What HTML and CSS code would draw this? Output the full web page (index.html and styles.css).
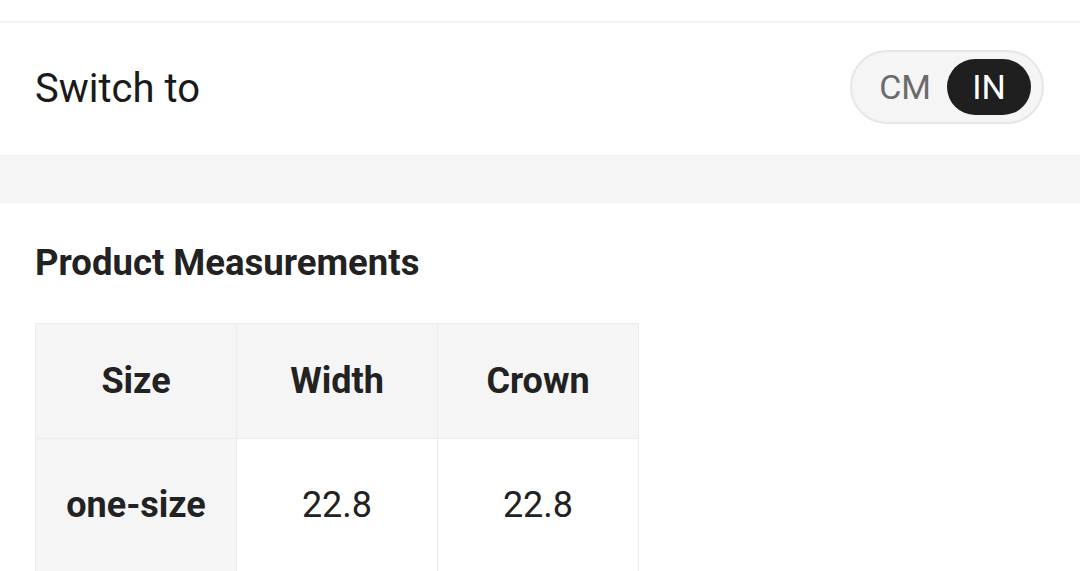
FILE: index.html
```html
<!DOCTYPE html>
<html>
<head>
<meta charset="utf-8">
<link rel="stylesheet" href="styles.css">
</head>
<body>
<div class="page">
  <div class="top-strip"></div>
  <div class="switch-row">
    <span class="switch-label">Switch to</span>
    <div class="toggle">
      <span class="opt opt-off">CM</span>
      <span class="opt opt-on">IN</span>
    </div>
  </div>
  <div class="band"></div>
  <section class="measure">
    <h2 class="measure-title">Product Measurements</h2>
    <table class="size-table">
      <thead>
        <tr>
          <th>Size</th>
          <th>Width</th>
          <th>Crown</th>
        </tr>
      </thead>
      <tbody>
        <tr>
          <th class="row-head">one-size</th>
          <td>22.8</td>
          <td>22.8</td>
        </tr>
      </tbody>
    </table>
  </section>
</div>
</body>
</html>
```

FILE: styles.css
```css
* { box-sizing: border-box; }
html, body {
  margin: 0;
  padding: 0;
  background: #fff;
  font-family: Roboto, "Liberation Sans", Arial, sans-serif;
  color: #222;
  overflow: hidden;
}
.page {
  width: 1080px;
}
.top-strip {
  height: 23px;
  border-bottom: 2px solid #f2f2f2;
}
.switch-row {
  height: 132px;
  display: flex;
  align-items: center;
  justify-content: space-between;
  padding: 0 36px 0 35px;
}
.switch-label {
  font-size: 40px;
  color: #1a1a1a;
  margin-top: -1px;
}
.toggle {
  display: flex;
  align-items: center;
  height: 74px;
  border: 2px solid #e6e6e6;
  border-radius: 37px;
  background: #f5f5f5;
  padding: 0 11px 0 27px;
  margin-top: -4px;
}
.opt {
  font-size: 34px;
  line-height: 56px;
}
.opt-off {
  color: #6b6b6b;
  padding-right: 16px;
}
.opt-on {
  background: #1f1f1f;
  color: #fff;
  width: 84px;
  height: 56px;
  border-radius: 28px;
  text-align: center;
}
.band {
  height: 48px;
  background: #f5f5f5;
  border-top: 1px solid #f0f0f0;
  border-bottom: 1px solid #f0f0f0;
}
.measure {
  padding: 0 35px;
}
.measure-title {
  margin: 0;
  padding-top: 39px;
  height: 120px;
  font-size: 36.5px;
  font-weight: 700;
  line-height: 42px;
  color: #222;
}
.size-table {
  border-collapse: collapse;
  table-layout: fixed;
  width: 604px;
}
.size-table th,
.size-table td {
  width: 201px;
  text-align: center;
  border: 1px solid #ececec;
  font-size: 36px;
  color: #222;
}
.size-table thead th {
  height: 115px;
  background: #f5f5f5;
  font-weight: 700;
}
.size-table tbody th,
.size-table tbody td {
  height: 133px;
}
.size-table .row-head {
  background: #f5f5f5;
  font-weight: 700;
}
.size-table td {
  background: #fff;
  font-weight: 400;
}
```
